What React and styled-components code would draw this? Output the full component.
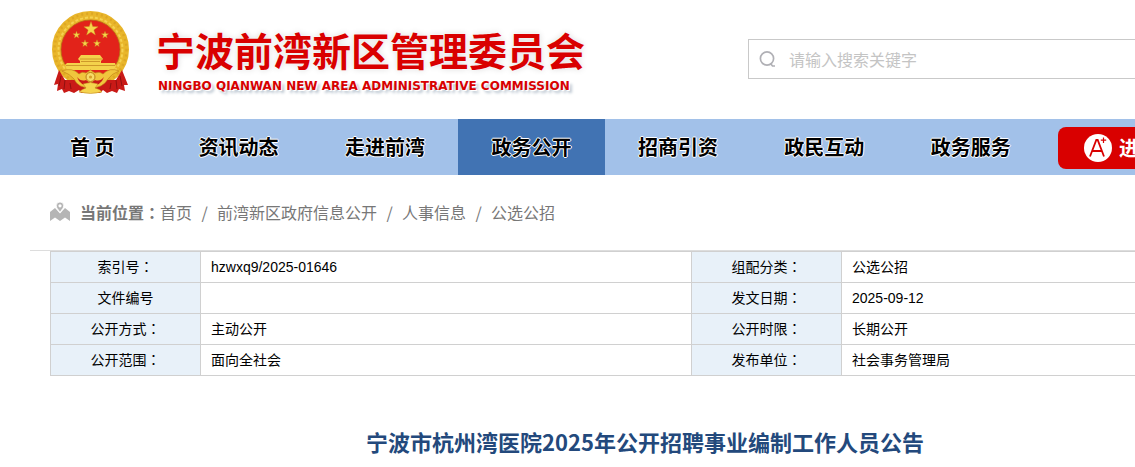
import React from "react";
import styled, { createGlobalStyle } from "styled-components";

const sans = '"Liberation Sans", "Noto Sans CJK SC", sans-serif';
const cjk = '"Noto Sans CJK SC", sans-serif';

const GlobalStyle = createGlobalStyle`
  * { box-sizing: border-box; }
  body { margin: 0; background: #fff; color: #000; font-family: ${sans}; font-size: 14px; }
`;

const Viewport = styled.div`
  overflow-x: hidden;
`;
const Page = styled.div`
  min-width: 1290px;
`;

const Header = styled.header`
  display: flex;
  align-items: flex-start;
  height: 119px;
  padding: 10px 50px 0;
`;
const Brand = styled.a`
  display: flex;
  flex: 0 0 698px;
  color: #d90000;
  text-decoration: none;
`;
const EmblemSvg = styled.svg`
  display: block;
  width: 80px;
  height: 86px;
`;
const BrandText = styled.div`
  display: flex;
  flex-direction: column;
  gap: 3px;
  padding: 13px 0 0 26px;
  white-space: nowrap;
`;
const BrandName = styled.span`
  font: 700 39px/52px ${cjk};
  text-shadow: 0 0 2px #fff, 0 0 6px #d8d8d8;
`;
const BrandLatin = styled.span`
  padding-left: 2px;
  font: 700 12px/16px "DejaVu Sans", sans-serif;
  text-shadow: 1px 1px 0 #fff, 3px 3px 3px #b4c0cc;
`;
const Search = styled.label`
  display: flex;
  align-items: center;
  flex: 1;
  gap: 12px;
  height: 40px;
  margin-top: 29px;
  padding-left: 10px;
  border: 1px solid #c9c9c9;
`;
const SearchIcon = styled.svg`
  flex: none;
  width: 18px;
  height: 18px;
`;
const SearchInput = styled.input`
  flex: 1;
  border: 0;
  padding: 0;
  outline: 0;
  background: none;
  font: 400 16px/24px ${cjk};
  &::placeholder { color: #c4c4c4; opacity: 1; }
`;

const NavBar = styled.nav`
  display: flex;
  align-items: flex-start;
  gap: 14px;
  height: 56px;
  padding: 0 19px;
  background: #a2c1e9;
`;
const NavList = styled.div`
  display: grid;
  grid-template-columns: repeat(7, 1fr);
  flex: 0 0 1025px;
`;
const NavLink = styled.a`
  font: 700 20px/56px ${cjk};
  height: 56px;
  text-align: center;
  color: #000;
  text-decoration: none;
  background: ${(p) => (p.$active ? "#4173b3" : "transparent")};
  text-shadow: 1px 0 0 #fff, -1px 0 0 #fff, 0 1px 0 #fff, 0 -1px 0 #fff;
`;
const CareButton = styled.button`
  display: flex;
  align-items: center;
  gap: 7px;
  flex: 1;
  height: 42px;
  margin-top: 8px;
  padding: 0 0 0 26px;
  border: 0;
  border-radius: 8px;
  background: #d90000;
  color: #fff;
  font: 700 20px/28px ${cjk};
`;

const Crumbs = styled.nav`
  display: flex;
  align-items: center;
  height: 76px;
  margin: 0 30px;
  padding: 0 20px 2px;
  border-bottom: 1px solid #ddd;
  color: #777;
  font: 400 16px/24px ${cjk};
`;
const PinIcon = styled.svg`
  width: 20px;
  height: 20px;
  margin-right: 10px;
`;
const CrumbLabel = styled.strong`
  font-weight: 700;
`;
const Crumb = styled.a`
  color: #777;
  text-decoration: none;
`;
const Slash = styled.span`
  width: 25px;
  text-align: center;
`;
const Colon = styled.span`
  font-family: "Noto Sans CJK TC", sans-serif;
  line-height: 1;
`;

const Main = styled.main`
  padding: 0 50px;
`;
const InfoTable = styled.table`
  width: 100%;
  table-layout: fixed;
  border-collapse: collapse;
  line-height: 20px;
`;
const Label = styled.th`
  width: ${(p) => p.$width || "auto"};
  height: 31px;
  padding: 0;
  border: 1px solid #d0d0d0;
  background: #e8f1f9;
  font-weight: 400;
  text-align: center;
`;
const Value = styled.td`
  width: ${(p) => p.$width || "auto"};
  padding: 0 10px;
  border: 1px solid #d0d0d0;
`;
const Title = styled.h1`
  margin: 49px 0 24px;
  color: #23497c;
  text-align: center;
  font: 700 22px/32px ${cjk};
`;

const star = (cx, cy, r) =>
  Array.from({ length: 10 }, (_, i) => {
    const a = (Math.PI * i) / 5 - Math.PI / 2;
    const q = i % 2 ? r * 0.4 : r;
    return `${(cx + q * Math.cos(a)).toFixed(2)},${(cy + q * Math.sin(a)).toFixed(2)}`;
  }).join(" ");

function Emblem() {
  return (
    <EmblemSvg viewBox="0 0 80 86" aria-hidden="true">
      <circle cx="40.500" cy="39.500" r="34" fill="#e2231a" stroke="#e9b62b" strokeWidth="9" />
      <circle cx="40.500" cy="39.500" r="36" fill="none" stroke="#c98c17" strokeWidth="2.500" strokeDasharray="2 3" opacity=".35" />
      <circle cx="40.500" cy="39.500" r="32" fill="none" stroke="#f5d251" strokeWidth="2" strokeDasharray="3 2" />
      <circle cx="40.500" cy="39.500" r="29.500" fill="none" stroke="#b86b16" strokeWidth=".8" />
      <path d="M9 60 L4 75 L8 74 L7 81 L12 79 L14 83 L19 81 L24 83 L29 80 L31 83 H50 L53 80 L57 83 L62 81 L67 83 L69 79 L75 81 L74 75 L78 75 L72 60 L66 70 H15Z" fill="#c91a17" />
      <g fill="#f6d54b" stroke="#c78a1b" strokeWidth=".4">
        <polygon points={star(41, 19, 7.500)} />
        <polygon points={star(26.500, 25, 3.700)} />
        <polygon points={star(55, 25, 3.700)} />
        <polygon points={star(35, 33.500, 3.700)} />
        <polygon points={star(47, 33.500, 3.700)} />
      </g>
      <path d="M31 45 H50 L53 49 L51 51 V53 H65 L66 56 L64 60 H17 L15 55 L17 53 H30 V51 L28 49Z" fill="#f4d24b" />
      <path d="M30 49H52M16 55.500H65M31 51.500H50" stroke="#c48a22" strokeWidth=".8" />
      <path d="M12 61 Q22 57 29 64 Q32 61 36 63 L40.500 60 L45 63 Q50 61 53 64 Q60 57 69 61 Q61 64 58 69 Q53 78 40.500 78 Q28 78 24 69 Q20 64 12 61Z" fill="#f0c63d" stroke="#bd7c17" strokeWidth=".6" />
      <path d="M27 67 Q31 72 36 70 L40.500 73 L45 70 Q50 72 54 67 Q51 76 40.500 76 Q30 76 27 67Z" fill="#c91a17" />
      <circle cx="40.500" cy="67" r="4.500" fill="#f7dc68" stroke="#bd7c17" />
      <circle cx="40.500" cy="67" r="1.600" fill="#d8a126" />
      <path d="M33 74 Q40.500 71 48 74 L45 78 Q50 79 52 82 Q40.500 85 29 82 Q32 79 36 78Z" fill="#f5d44e" stroke="#bd7c17" strokeWidth=".5" />
      <path d="M11 66 L9 76M15 70 L14 79M20 73 L21 79M66 70 L67 79M61 73 L60 79M70 66 L72 76" stroke="#8f1010" strokeWidth="1" />
    </EmblemSvg>
  );
}

const navItems = ["首 页", "资讯动态", "走进前湾", "政务公开", "招商引资", "政民互动", "政务服务"];
const crumbs = ["首页", "前湾新区政府信息公开", "人事信息", "公选公招"];
const rows = [
  ["索引号：", "hzwxq9/2025-01646", "组配分类：", "公选公招"],
  ["文件编号", "", "发文日期：", "2025-09-12"],
  ["公开方式：", "主动公开", "公开时限：", "长期公开"],
  ["公开范围：", "面向全社会", "发布单位：", "社会事务管理局"],
];

const withColon = (text) =>
  text.endsWith("：") ? <>{text.slice(0, -1)}<Colon>：</Colon></> : text;

export default function App() {
  return (
    <Viewport>
      <GlobalStyle />
      <Page>
        <Header>
          <Brand href="#">
            <Emblem />
            <BrandText>
              <BrandName>宁波前湾新区管理委员会</BrandName>
              <BrandLatin>NINGBO QIANWAN NEW AREA ADMINISTRATIVE COMMISSION</BrandLatin>
            </BrandText>
          </Brand>
          <Search>
            <SearchIcon viewBox="0 0 18 18" fill="none" stroke="#b0b0b5" strokeWidth="1.700" aria-hidden="true">
              <circle cx="8" cy="8.500" r="6.600" />
              <path d="M11.500 13.500 L13.500 16 H16" />
            </SearchIcon>
            <SearchInput type="text" placeholder="请输入搜索关键字" aria-label="请输入搜索关键字" />
          </Search>
        </Header>
        <NavBar>
          <NavList>
            {navItems.map((t) => (
              <NavLink key={t} href="#" $active={t === "政务公开"}>{t}</NavLink>
            ))}
          </NavList>
          <CareButton type="button">
            <svg width="28" height="28" viewBox="0 0 28 28" aria-hidden="true">
              <circle cx="14" cy="14" r="14" fill="#fff" />
              <path d="M6 22.500 L12.300 6 H13.700 L20 22.500 M8.500 17 H17.500" fill="none" stroke="#d90000" strokeWidth="1.800" />
              <path d="M19.500 3.500 V9 M16.800 6.200 H22.200" stroke="#d90000" strokeWidth="1.200" />
            </svg>
            进
          </CareButton>
        </NavBar>
        <Crumbs>
          <PinIcon viewBox="0 0 20 20" aria-hidden="true">
            <path d="M0 10 L5 6 L10 11.500 L15 6 L20 10 V19 L15 15.500 L10 19 L5 15.500 L0 19Z" fill="#b5b5b5" />
            <path d="M10 10.500 C8 7 6.300 6 6.300 3.700 A3.700 3.700 0 0 1 13.700 3.700 C13.700 6 12 7 10 10.500Z" fill="#b5b5b5" stroke="#fff" strokeWidth=".8" />
            <circle cx="10" cy="3.800" r="1.600" fill="#fff" />
          </PinIcon>
          <CrumbLabel>{withColon("当前位置：")}</CrumbLabel>
          {crumbs.map((t, i) => (
            <React.Fragment key={t}>
              {i > 0 && <Slash>/</Slash>}
              <Crumb href="#">{t}</Crumb>
            </React.Fragment>
          ))}
        </Crumbs>
        <Main>
          <InfoTable>
            <tbody>
              {rows.map(([a, b, c, d]) => (
                <tr key={a}>
                  <Label scope="row" $width="150px">{withColon(a)}</Label>
                  <Value $width="491px">{b}</Value>
                  <Label scope="row" $width="150px">{withColon(c)}</Label>
                  <Value>{d}</Value>
                </tr>
              ))}
            </tbody>
          </InfoTable>
          <Title>宁波市杭州湾医院2025年公开招聘事业编制工作人员公告</Title>
        </Main>
      </Page>
    </Viewport>
  );
}
